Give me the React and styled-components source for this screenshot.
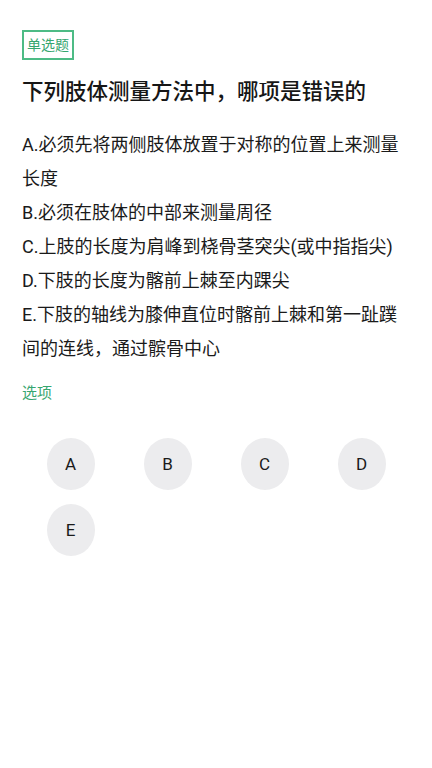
import React from "react";
import styled, { createGlobalStyle } from "styled-components";

const Global = createGlobalStyle`
  html, body { margin: 0; padding: 0; background: #fff; }
  body { font-family: Roboto, "Noto Sans CJK SC", sans-serif; color: #222; }
`;

const Page = styled.div`
  width: 432px;
  min-height: 768px;
  box-sizing: border-box;
  padding: 30px 22px 0 22px;
  display: flex;
  flex-direction: column;
`;

const Badge = styled.div`
  align-self: flex-start;
  border: 2px solid #4dbb85;
  color: #36a66f;
  font-size: 14px;
  line-height: 18px;
  padding: 4px 3px;
`;

const Title = styled.h1`
  margin: 17px 0 0 0;
  font-size: 21.5px;
  font-weight: 500;
  line-height: 30px;
  color: #161616;
`;

const Options = styled.div`
  margin-top: 21px;
  font-size: 18px;
  line-height: 34px;
  color: #1a1a1a;
`;

const Line = styled.div``;

const SectionLabel = styled.div`
  margin-top: 17px;
  color: #36a66f;
  font-size: 15px;
  line-height: 20px;
`;

const Grid = styled.div`
  margin-top: 35px;
  display: grid;
  grid-template-columns: repeat(4, 1fr);
  row-gap: 14px;
`;

const Choice = styled.div`
  justify-self: center;
  width: 48px;
  height: 52px;
  border-radius: 50%;
  background: #ececee;
  display: flex;
  align-items: center;
  justify-content: center;
  font-size: 17px;
  color: #1a1a1a;
`;

const lines = [
  "A.必须先将两侧肢体放置于对称的位置上来测量长度",
  "B.必须在肢体的中部来测量周径",
  "C.上肢的长度为肩峰到桡骨茎突尖(或中指指尖)",
  "D.下肢的长度为髂前上棘至内踝尖",
  "E.下肢的轴线为膝伸直位时髂前上棘和第一趾蹼间的连线，通过髌骨中心",
];

export default function App() {
  return (
    <>
      <Global />
      <Page>
        <Badge>单选题</Badge>
        <Title>下列肢体测量方法中，哪项是错误的</Title>
        <Options>
          {lines.map((l) => (
            <Line key={l}>{l}</Line>
          ))}
        </Options>
        <SectionLabel>选项</SectionLabel>
        <Grid>
          {["A", "B", "C", "D", "E"].map((c) => (
            <Choice key={c}>{c}</Choice>
          ))}
        </Grid>
      </Page>
    </>
  );
}
